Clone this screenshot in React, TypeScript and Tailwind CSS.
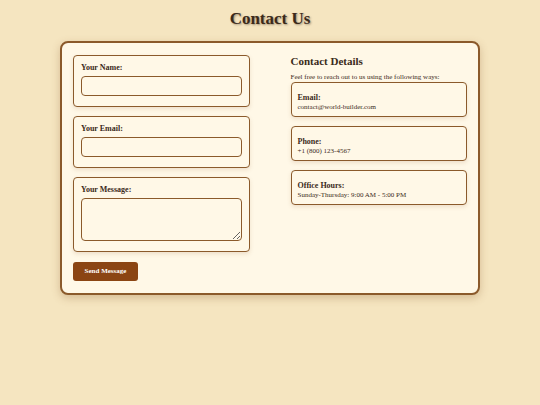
import React from "react";

const serif = { fontFamily: '"Liberation Serif", "Times New Roman", serif' };

function Field({ label, multiline }: { label: string; multiline?: boolean }) {
  return (
    <div className="rounded-[4px] border-[1.5px] border-[#8b5a2b] bg-[#fff8e7] px-[7px] pb-[10px] pt-[7px] shadow-[0_2px_4px_rgba(139,90,43,0.15)]">
      <label className="block text-[8px] font-bold leading-[10px] text-[#3b2a1a]">{label}</label>
      {multiline ? (
        <textarea className="mt-[3px] block h-[43px] w-full resize-y rounded-[4px] border-[1.5px] border-[#8b5a2b] bg-[#fff8e7] outline-none" />
      ) : (
        <input className="mt-[3px] block h-[20px] w-full rounded-[4px] border-[1.5px] border-[#8b5a2b] bg-[#fff8e7] outline-none" />
      )}
    </div>
  );
}

function InfoCard({ title, value }: { title: string; value: string }) {
  return (
    <div className="rounded-[4px] border-[1.5px] border-[#8b5a2b] bg-[#fff8e7] px-[6px] pb-[4px] pt-[10px] shadow-[0_2px_4px_rgba(139,90,43,0.15)]">
      <p className="text-[8px] font-bold leading-[10px] text-[#3b2a1a]">{title}</p>
      <p className="text-[7px] leading-[9px] text-[#3b2a1a]">{value}</p>
    </div>
  );
}

export default function App() {
  return (
    <div style={serif} className="min-h-[405px] w-full bg-[#f5e5c0] pt-[8px]">
      <h1 className="text-center text-[17px] font-bold leading-[22px] text-[#3b2a1a] [text-shadow:1px_1px_2px_rgba(59,42,26,0.45)]">
        Contact Us
      </h1>
      <div className="mx-auto mt-[11px] w-[420px] rounded-[8px] border-2 border-[#8b5a2b] bg-[#fff8e7] px-[11px] pb-[12px] pt-[12px] shadow-[0_3px_8px_rgba(139,90,43,0.3)]">
        <div className="grid grid-cols-2 gap-[41px]">
          <div className="flex flex-col gap-[9px]">
            <Field label="Your Name:" />
            <Field label="Your Email:" />
            <Field label="Your Message:" multiline />
            <button className="mt-[1px] w-[65px] rounded-[3px] bg-[#8b4513] py-[4px] text-[7px] font-bold text-white">
              Send Message
            </button>
          </div>
          <div>
            <h2 className="text-[11px] font-bold leading-[12px] text-[#3b2a1a]">Contact Details</h2>
            <p className="mt-[6px] text-[7px] leading-[9px] text-[#3b2a1a]">
              Feel free to reach out to us using the following ways:
            </p>
            <div className="flex flex-col gap-[9px]">
              <InfoCard title="Email:" value="contact@world-builder.com" />
              <InfoCard title="Phone:" value="+1 (800) 123-4567" />
              <InfoCard title="Office Hours:" value="Sunday-Thursday: 9:00 AM - 5:00 PM" />
            </div>
          </div>
        </div>
      </div>
    </div>
  );
}
